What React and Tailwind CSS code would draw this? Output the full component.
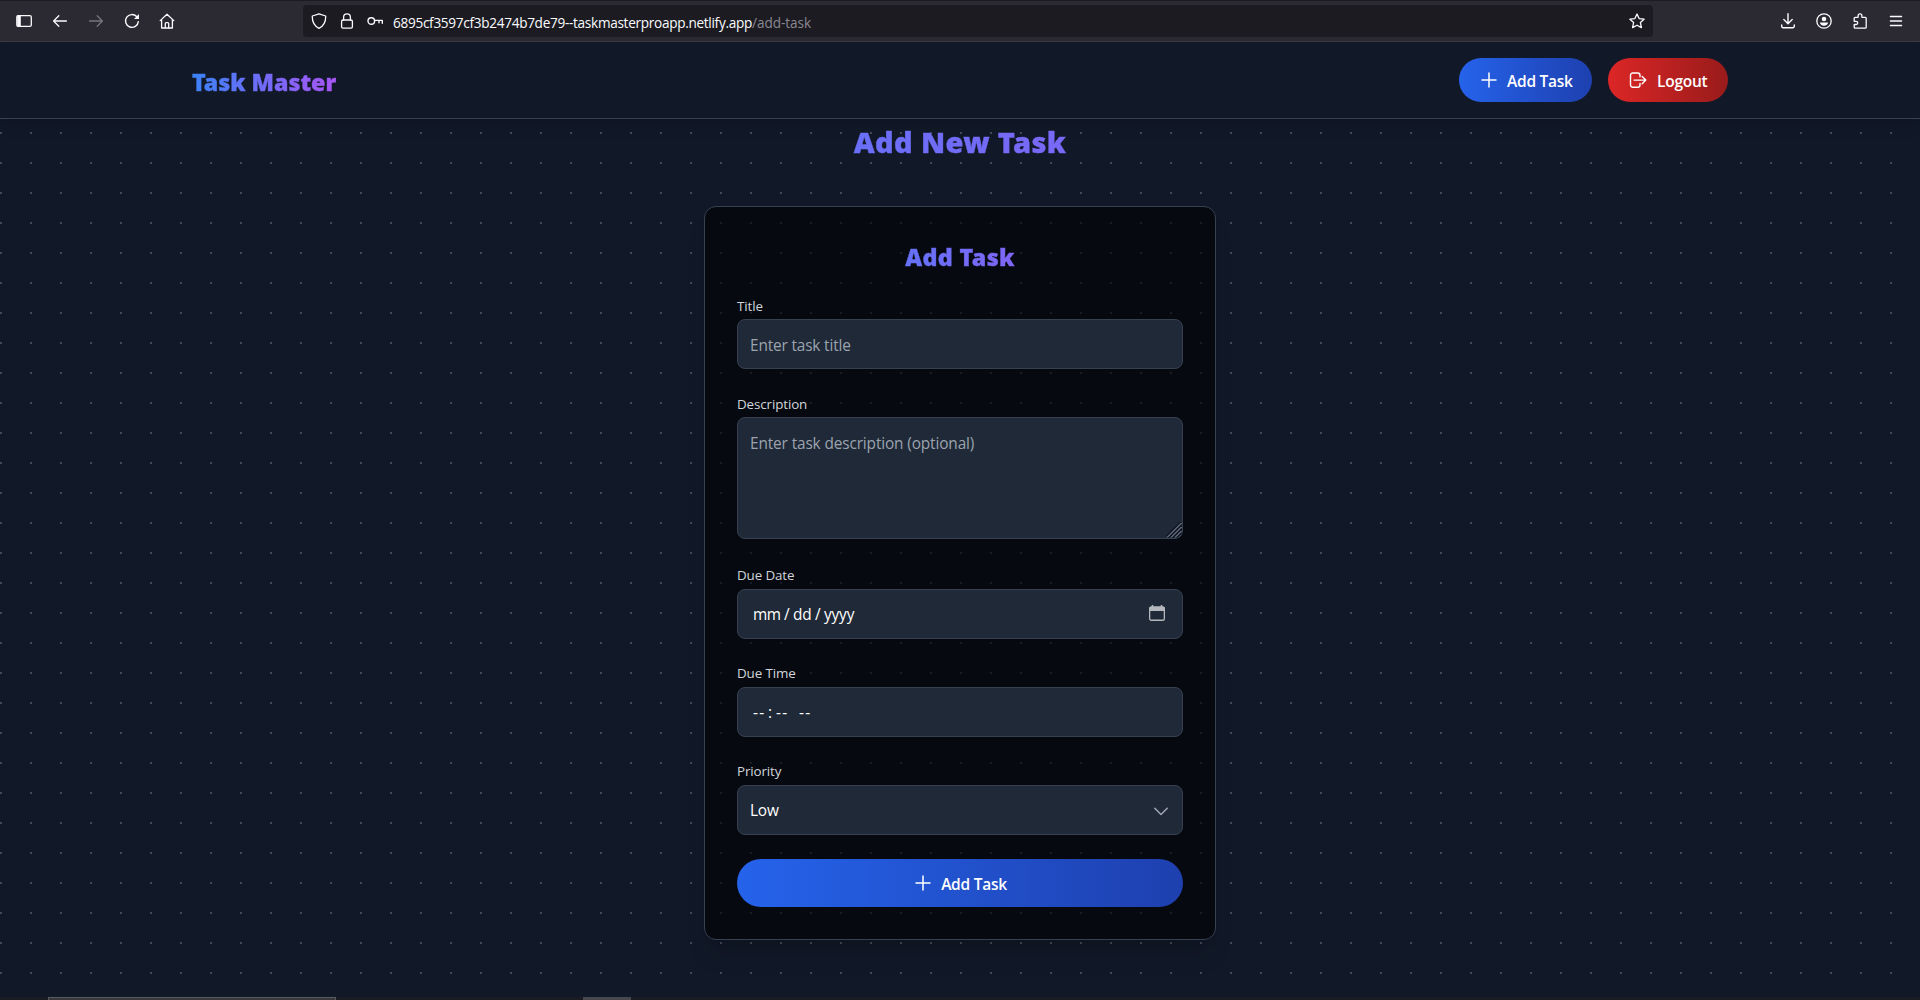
import React from 'react';

const iconProps = { fill: 'none', stroke: 'currentColor', strokeLinecap: 'round', strokeLinejoin: 'round' };

function Icon({ size = 16, sw = 1.3, className = '', children }) {
  return (
    <svg width={size} height={size} viewBox={`0 0 ${size} ${size}`} strokeWidth={sw} className={`block shrink-0 ${className}`} {...iconProps}>
      {children}
    </svg>
  );
}

function BrowserBar() {
  return (
    <div className="flex h-[42px] items-center border-t border-b border-t-[#1c1b22] border-b-[#3a3944] bg-[#2b2a33] text-[#fbfbfe]">
      <div className="flex w-[303px] shrink-0 items-center gap-5 pl-4">
        <Icon>
          <rect x="0.8" y="2.7" width="14.5" height="10.6" rx="1.4" />
          <path d="M1.2 2.2h3.6v11.6H1.2z" fill="currentColor" stroke="none" />
        </Icon>
        <Icon><path d="M14.4 8H1.8M6.8 2.8 1.6 8l5.2 5.2" /></Icon>
        <Icon className="text-[#77767e]"><path d="M1.6 8h12.6M9.2 2.8 14.4 8l-5.2 5.2" /></Icon>
        <Icon sw={1.4}>
          <path d="M14.3 8.6A6.4 6.4 0 1 1 12.6 3.6" />
          <path d="M15 1v5h-5z" fill="currentColor" stroke="none" />
        </Icon>
        <Icon className="-ml-px">
          <path d="M1.2 7.6 8 1.2l6.8 6.4M2.6 6.6V15h10.8V6.6" />
          <path d="M6.3 15v-4.4a1 1 0 0 1 1-1h1.4a1 1 0 0 1 1 1V15" />
        </Icon>
      </div>
      <div className="flex h-8 w-[1350px] shrink-0 items-center rounded-[4px] bg-[#1c1b22] px-2">
        <Icon>
          <path d="M8 .8 14.7 3c.2 5.3-1 9.700-6.7 12.300C2.300 12.700 1.100 8.300 1.300 3z" />
        </Icon>
        <Icon className="ml-3">
          <rect x="2.6" y="7" width="10.8" height="8.2" rx="1.4" />
          <path d="M4.600 7V4.300a3.400 3.400 0 0 1 6.800 0V7" />
        </Icon>
        <Icon className="ml-3" sw={1.4}>
          <circle cx="4.3" cy="8" r="3.3" />
          <path d="M7.600 7.400h7.700v2.800M12 7.400v2.300" />
        </Icon>
        <div className="ml-[10px] whitespace-nowrap pt-[3px] font-['Open_Sans','Noto_Sans',sans-serif] text-[13.6px] leading-5 tracking-[-0.3px]">
          6895cf3597cf3b2474b7de79--taskmasterproapp.netlify.app
          <span className="tracking-[-0.06px] text-[#8a8990]">/add-task</span>
        </div>
        <Icon className="ml-auto">
          <path d="m8 1 2.100 4.600 5 .6-3.700 3.400 1 5L8 12.200 3.600 14.600l1-5L.9 6.200l5-.6z" />
        </Icon>
      </div>
      <div className="ml-auto flex items-center gap-5 pr-4">
        <Icon sw={1.4}>
          <path d="M8 .8v9.800M3.800 6.600 8 10.800l4.200-4.200M1.700 12v1.300a1.500 1.500 0 0 0 1.500 1.500h9.600a1.500 1.500 0 0 0 1.500-1.500V12" />
        </Icon>
        <Icon>
          <circle cx="8" cy="8" r="7.2" />
          <circle cx="8" cy="6" r="2.3" fill="currentColor" stroke="none" />
          <path d="M4 9.600h8c0 1.900-1.600 3.100-4 3.100s-4-1.200-4-3.100z" fill="currentColor" stroke="none" />
        </Icon>
        <Icon>
          <path d="M2.200 5.300a1 1 0 0 1 1-1h2.900V2.700a1.900 1.900 0 0 1 3.800 0v1.600h3.300a1 1 0 0 1 1 1v8.900a1 1 0 0 1-1 1h-10a1 1 0 0 1-1-1v-2.700h1.900a1.600 1.600 0 0 0 0-3.200H2.200z" />
        </Icon>
        <Icon><path d="M2.400 3.500h11.200M2.400 8h11.200M2.400 12.500h11.200" /></Icon>
      </div>
    </div>
  );
}

function PlusIcon() {
  return <Icon size={20} sw={1.5}><path d="M10 3v14M3 10h14" /></Icon>;
}

function LogoutIcon() {
  return (
    <Icon size={20} sw={1.4}>
      <path d="M12 6.800V5.200a2.200 2.200 0 0 0-2.200-2.200H4.700a2.200 2.200 0 0 0-2.200 2.200v9.800a2.200 2.200 0 0 0 2.200 2.200h5.100a2.200 2.200 0 0 0 2.200-2.200v-1.600M6 10.100h11.700M14.200 6.500l3.600 3.600-3.600 3.600" />
    </Icon>
  );
}

function ButtonText({ children }) {
  return <span className="pt-[2px] text-[15.5px] font-semibold leading-6 tracking-[-0.25px]">{children}</span>;
}

function Field({ label, leading = 'leading-[21px]', children }) {
  return (
    <div>
      <label className={`mb-1 block h-5 text-[13.4px] tracking-[-0.12px] text-[#d1d5db] ${leading}`}>{label}</label>
      {children}
    </div>
  );
}

const box = 'flex w-full rounded-lg border border-[#374151] bg-[#1f2937] text-[15.4px] leading-6 tracking-[-0.16px] text-white';
const gradientText =
  "bg-linear-to-r/srgb from-[#3b82f6] to-[#a855f7] bg-clip-text font-['Noto_Sans','Open_Sans',sans-serif] font-black text-transparent [-webkit-text-stroke:0.4px_transparent]";
const blueButton = 'bg-linear-to-r/srgb from-[#2563eb] to-[#1e40af]';
const redButton = 'bg-linear-to-r/srgb from-[#dc2626] to-[#991b1b]';

export default function App() {
  return (
    <div className="flex h-[1000px] flex-col overflow-hidden bg-[#111827] font-['Open_Sans','Noto_Sans',sans-serif]">
      <BrowserBar />
      <div className="flex min-h-0 flex-1 flex-col bg-[conic-gradient(from_270deg_at_2px_2px,#434957_90deg,transparent_0)] bg-size-[30px_30px]">
        <header className="h-[77px] shrink-0 border-b border-[#374151] bg-[#111827] shadow-lg">
          <div className="mx-auto flex h-[76px] w-[1536px] items-center justify-between">
            <h1 className={`${gradientText} pt-1 text-[23.2px] leading-8`}>Task Master</h1>
            <div className="flex gap-4 text-white">
              <button className={`${blueButton} flex h-11 w-[133px] items-center gap-2 rounded-full pl-5`}>
                <PlusIcon />
                <ButtonText>Add Task</ButtonText>
              </button>
              <button className={`${redButton} flex h-11 w-[120px] items-center gap-[9px] rounded-full pl-5`}>
                <LogoutIcon />
                <ButtonText>Logout</ButtonText>
              </button>
            </div>
          </div>
        </header>

        <main className="mx-auto flex w-[1536px] flex-1 flex-col items-center">
          <h2 className={`${gradientText} mt-[5px] h-9 w-full text-center text-[29px] leading-9 tracking-[0.35px]`}>Add New Task</h2>
          <section className="mt-[46px] w-[512px] rounded-xl border border-[#374151] bg-black/60 p-8 shadow-xl">
            <h3 className={`${gradientText} mt-[2px] h-8 text-center text-[23.3px] leading-8 tracking-[0.35px]`}>Add Task</h3>
            <div className="mt-[22px] flex flex-col gap-6">
              <Field label="Title" leading="leading-[22px]">
                <div className={`${box} h-[50px] px-3 pt-[14px]`}>
                  <span className="text-[#9ca3af]">Enter task title</span>
                </div>
              </Field>
              <Field label="Description" leading="leading-[22px]">
                <div className={`${box} relative h-[122px] overflow-hidden px-3 pt-[14px]`}>
                  <span className="tracking-[-0.13px] text-[#9ca3af]">Enter task description (optional)</span>
                  <svg width="16" height="16" viewBox="0 0 16 16" className="absolute bottom-0 right-0 text-[#9aa0aa]" fill="none">
                    <path d="M0 15 15 0M3 16 16 3M7 16l9-9M11 16l5-5" stroke="#111827" strokeWidth="2" />
                    <path d="M1 15.500 15.500 1M5 15.500 15.500 5M9 15.500 15.500 9M12.500 15.500l3-3" stroke="currentColor" strokeWidth="1" />
                  </svg>
                </div>
              </Field>
              <div className="mt-[2px] flex flex-col gap-6">
                <Field label="Due Date">
                  <div className={`${box} h-[50px] justify-between pl-[15px] pr-[17px] pt-[13px]`}>
                    <div className="flex">
                      <span className="w-[31px] tracking-[-0.5px]">mm</span>
                      <span className="w-[9px]">/</span>
                      <span className="w-[22px]">dd</span>
                      <span className="w-[9px]">/</span>
                      <span>yyyy</span>
                    </div>
                    <svg width="16" height="16" viewBox="0 0 16 16" className="mt-[2px] text-[#b4b7bc]" fill="none">
                      <rect x="0.65" y="2.15" width="14.7" height="13.1" rx="1.6" stroke="currentColor" strokeWidth="1.3" />
                      <path d="M2 1.500h12a2 2 0 0 1 2 2V6H0V3.500a2 2 0 0 1 2-2zM2.700 0h1.600v2H2.700zM11.700 0h1.600v2h-1.600z" fill="currentColor" />
                    </svg>
                  </div>
                </Field>
                <Field label="Due Time">
                  <div className={`${box} h-[50px] pl-[15px] pt-[13px]`}>
                    <span className="w-[15px] tracking-[1.4px]">--</span>
                    <span className="w-[8px]">:</span>
                    <span className="w-[23px] tracking-[1.4px]">--</span>
                    <span className="tracking-[1.4px]">--</span>
                  </div>
                </Field>
                <Field label="Priority">
                  <div className={`${box} h-[50px] justify-between pl-3 pr-[13px] pt-[13px]`}>
                    <span>Low</span>
                    <svg width="16" height="16" viewBox="0 0 16 16" className="mt-1 text-[#9ca3af]" {...iconProps} strokeWidth="1.6">
                      <path d="m1.800 5.300 6.200 6.200 6.200-6.200" />
                    </svg>
                  </div>
                </Field>
              </div>
              <button className={`${blueButton} flex h-12 items-center justify-center gap-2 rounded-full text-white`}>
                <PlusIcon />
                <ButtonText>Add Task</ButtonText>
              </button>
            </div>
          </section>
        </main>
      </div>
      <div className="flex h-[3px] shrink-0 bg-[#1a1c23]">
        <div className="ml-12 w-[288px] border-x border-t border-[#5a5960] bg-[#39383d]" />
        <div className="ml-[247px] w-12 bg-[#47474e]" />
      </div>
    </div>
  );
}
